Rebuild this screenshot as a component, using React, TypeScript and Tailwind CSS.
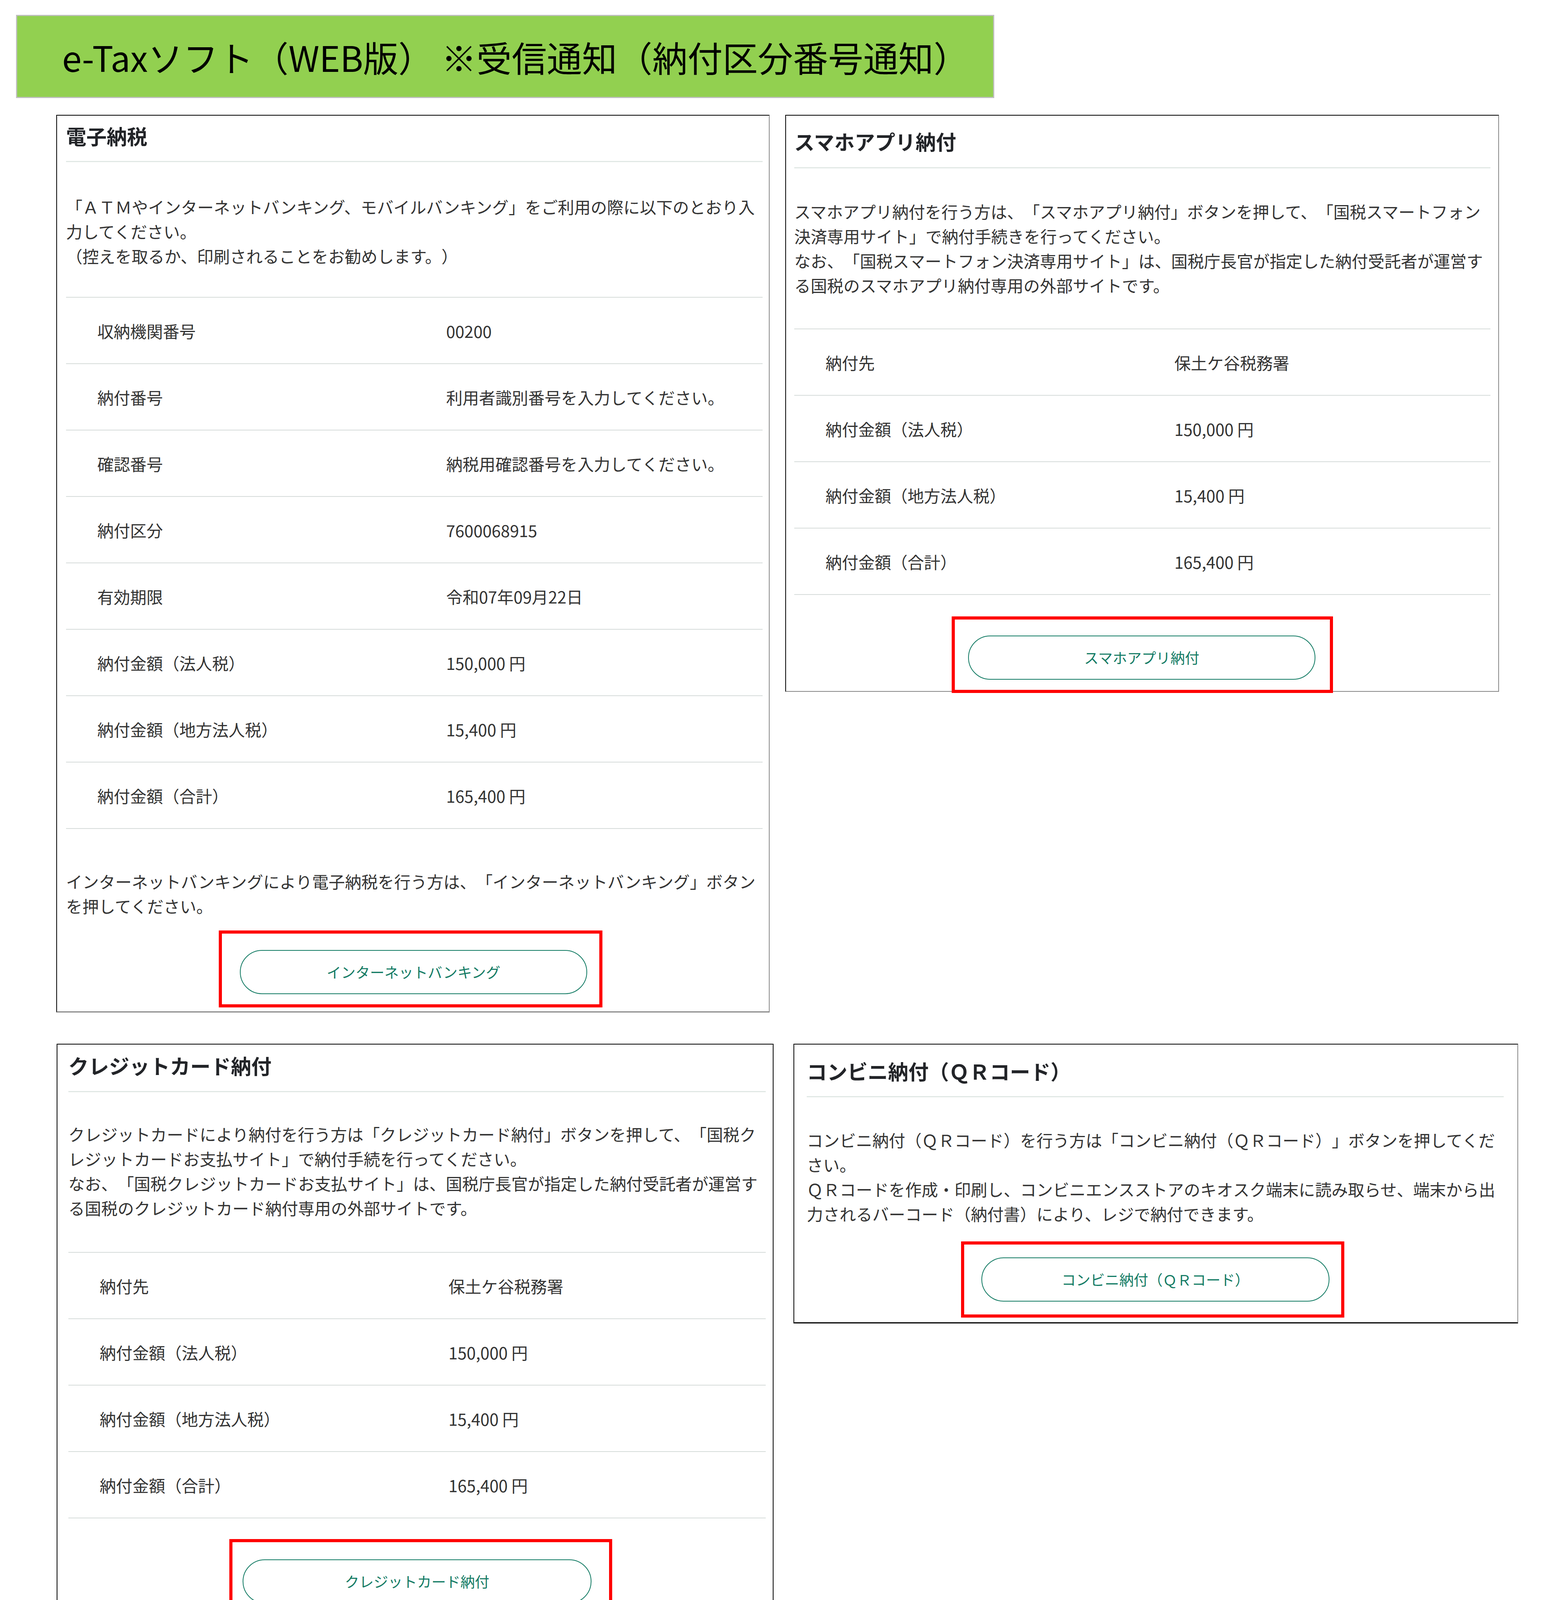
import React from 'react'

type Row = [string, string]

const paymentRows: Row[] = [
  ['収納機関番号', '00200'],
  ['納付番号', '利用者識別番号を入力してください。'],
  ['確認番号', '納税用確認番号を入力してください。'],
  ['納付区分', '7600068915'],
  ['有効期限', '令和07年09月22日'],
  ['納付金額（法人税）', '150,000 円'],
  ['納付金額（地方法人税）', '15,400 円'],
  ['納付金額（合計）', '165,400 円'],
]

const officeRows: Row[] = [
  ['納付先', '保土ケ谷税務署'],
  ['納付金額（法人税）', '150,000 円'],
  ['納付金額（地方法人税）', '15,400 円'],
  ['納付金額（合計）', '165,400 円'],
]

function Heading({ text, className }: { text: string; className: string }) {
  return (
    <h3 className={`border-b-[3px] border-[#e1e8e5] text-[52px] leading-[78px] font-bold text-[#222428] ${className}`}>
      {text}
    </h3>
  )
}

function Para({ lines, className }: { lines: string[]; className: string }) {
  return (
    <div className={`text-[42px] leading-[63px] text-[#333] ${className}`}>
      {lines.map((line, i) => (
        <p key={i} className="whitespace-nowrap">{line}</p>
      ))}
    </div>
  )
}

function InfoTable({ rows, className }: { rows: Row[]; className: string }) {
  return (
    <div className={`border-t-2 border-[#d6dcda] text-[42px] text-[#333] ${className}`}>
      {rows.map(([label, value]) => (
        <div key={label} className="grid h-[170px] grid-cols-[973px_1fr] items-center border-b-2 border-[#d6dcda]">
          <div className="pl-[80px] whitespace-nowrap">{label}</div>
          <div className="whitespace-nowrap">{value}</div>
        </div>
      ))}
    </div>
  )
}

function ActionButton({ label, boxClass, width = 'w-[889px]' }: { label: string; boxClass: string; width?: string }) {
  // 赤枠は注記として後から描かれたもの
  return (
    <div className={`w-fit border-8 border-[#ff0000] ${boxClass}`}>
      <div className={`flex h-[113px] ${width} items-center justify-center rounded-full border-2 border-[#137b64] text-[37px] text-[#137b64]`}>
        {label}
      </div>
    </div>
  )
}

export default function App() {
  return (
    <div className="min-h-[4180px] w-[3947px] bg-white pt-[38px] font-['Noto_Sans_CJK_JP','Noto_Sans',sans-serif] [text-spacing-trim:space-all]">
      {/* タイトル帯 */}
      <div className="ml-[41px] flex h-[213px] w-[2504px] items-center border-[3px] border-[#bfbfbf] bg-[#92d050] pl-[115px]">
        <span className="text-[90px] leading-none whitespace-nowrap text-black">
          e-Taxソフト（WEB版） ※受信通知（納付区分番号通知）
        </span>
      </div>

      {/* 上段 */}
      <div className="mt-[43px] flex items-start gap-[40px] pl-[144px]">
        <section className="w-[1826px] border-2 border-b-[3px] border-[#888] border-t-black border-l-black pr-[16px] pb-[10px] pl-[23px]">
          <Heading text="電子納税" className="pt-[13px] pb-[25px]" />
          <Para
            className="mt-[82px]"
            lines={[
              '「ＡＴＭやインターネットバンキング、モバイルバンキング」をご利用の際に以下のとおり入',
              '力してください。',
              '（控えを取るか、印刷されることをお勧めします。）',
            ]}
          />
          <InfoTable rows={paymentRows} className="mt-[74px]" />
          <Para
            className="mt-[102px]"
            lines={[
              'インターネットバンキングにより電子納税を行う方は、「インターネットバンキング」ボタン',
              'を押してください。',
            ]}
          />
          <ActionButton label="インターネットバンキング" boxClass="mt-[32px] ml-[391px] pt-[42px] pr-[31px] pb-[26px] pl-[46px]" />
        </section>

        <section className="w-[1827px] border-2 border-[#888] border-t-black border-l-black pr-[20px] pl-[21px]">
          <Heading text="スマホアプリ納付" className="pt-[27px] pb-[27px]" />
          <Para
            className="mt-[78px]"
            lines={[
              'スマホアプリ納付を行う方は、「スマホアプリ納付」ボタンを押して、「国税スマートフォン',
              '決済専用サイト」で納付手続きを行ってください。',
              'なお、「国税スマートフォン決済専用サイト」は、国税庁長官が指定した納付受託者が運営す',
              'る国税のスマホアプリ納付専用の外部サイトです。',
            ]}
          />
          <InfoTable rows={officeRows} className="mt-[80px]" />
          <ActionButton label="スマホアプリ納付" boxClass="mt-[55px] -mb-[5px] ml-[403px] pt-[41px] pr-[37px] pb-[26px] pl-[34px]" />
        </section>
      </div>

      {/* 下段 */}
      <div className="mt-[80px] flex items-start gap-[51px] pl-[145px]">
        <section className="w-[1835px] border-2 border-[#888] border-t-black border-r-black border-l-black pr-[18px] pb-[3px] pl-[28px]">
          <Heading text="クレジットカード納付" className="pt-[15px] pb-[26px]" />
          <Para
            className="mt-[75px]"
            lines={[
              'クレジットカードにより納付を行う方は「クレジットカード納付」ボタンを押して、「国税ク',
              'レジットカードお支払サイト」で納付手続を行ってください。',
              'なお、「国税クレジットカードお支払サイト」は、国税庁長官が指定した納付受託者が運営す',
              'る国税のクレジットカード納付専用の外部サイトです。',
            ]}
          />
          <InfoTable rows={officeRows} className="mt-[82px]" />
          <ActionButton label="クレジットカード納付" width="w-[893px]" boxClass="mt-[53px] ml-[412px] pt-[44px] pr-[45px] pb-[21px] pl-[26px]" />
        </section>

        <section className="w-[1855px] border-2 border-b-[3px] border-black border-r-[#888] pr-[35px] pb-[12px] pl-[32px]">
          <Heading text="コンビニ納付（ＱＲコード）" className="pt-[29px] pb-[25px]" />
          <Para
            className="mt-[77px]"
            lines={[
              'コンビニ納付（ＱＲコード）を行う方は「コンビニ納付（ＱＲコード）」ボタンを押してくだ',
              'さい。',
              'ＱＲコードを作成・印刷し、コンビニエンスストアのキオスク端末に読み取らせ、端末から出',
              '力されるバーコード（納付書）により、レジで納付できます。',
            ]}
          />
          <ActionButton label="コンビニ納付（ＱＲコード）" width="w-[891px]" boxClass="mt-[40px] ml-[395px] pt-[33px] pr-[30px] pb-[33px] pl-[44px]" />
        </section>
      </div>
    </div>
  )
}
